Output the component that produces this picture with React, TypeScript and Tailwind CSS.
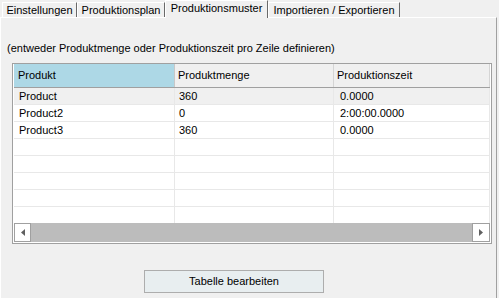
import React from "react";

const rows: [string, string, string][] = [
  ["Product", "360", "0.0000"],
  ["Product2", "0", "2:00:00.0000"],
  ["Product3", "360", "0.0000"],
  ["", "", ""],
  ["", "", ""],
  ["", "", ""],
  ["", "", ""],
  ["", "", ""],
];

function Tab({ label, w, selected }: { label: string; w: string; selected?: boolean }) {
  if (selected) {
    return (
      <div
        className={`${w} h-[18px] -mb-px relative z-10 bg-[#f0f0f0] border-t border-l border-white border-r border-r-[#696969] flex items-center justify-center leading-[13px] pb-[2px]`}
      >
        {label}
      </div>
    );
  }
  return (
    <div
      className={`${w} h-[15px] bg-[#f0f0f0] border-t border-l border-white border-r border-r-[#696969] flex items-center justify-center leading-[13px]`}
    >
      {label}
    </div>
  );
}

export default function App() {
  return (
    <div className="w-[499px] h-[298px] bg-[#f0f0f0] flex flex-col overflow-hidden font-['Liberation_Sans',Arial,sans-serif] text-[11px] text-black">
      <div className="h-[17px] flex items-end pl-[2px] shrink-0">
        <Tab label="Einstellungen" w="w-[75px]" />
        <Tab label="Produktionsplan" w="w-[88px]" />
        <Tab label="Produktionsmuster" w="w-[103px]" selected />
        <Tab label="Importieren / Exportieren" w="w-[132px]" />
      </div>
      <div className="flex-1 flex flex-col border-t border-l border-white border-r border-r-[#a0a0a0] mr-[2px]">
        <div className="mt-[24px] pl-[6px] leading-[13px]">
          (entweder Produktmenge oder Produktionszeit pro Zeile definieren)
        </div>
        <div className="mt-[8px] ml-[11px] w-[480px] border border-[#a0a0a0] bg-white px-px pb-px flex flex-col">
          <div className="h-[24px] flex border-b border-[#a0a0a0] bg-[#f0f0f0]">
            <div className="w-[161px] bg-[#add8e6] border-r border-[#c8c8c8] flex items-center pl-[4px]">Produkt</div>
            <div className="w-[159px] border-r border-[#d5d5d5] flex items-center pl-[3px]">Produktmenge</div>
            <div className="w-[156px] border-r border-[#d5d5d5] flex items-center pl-[3px]">Produktionszeit</div>
          </div>
          <div className="h-[135px] overflow-hidden flex flex-col">
            {rows.map((r, i) => (
              <div
                key={i}
                className={`h-[17px] shrink-0 flex border-b border-[#e8e8e8] ${i === 0 ? "bg-[#f0f0f0]" : "bg-white"}`}
              >
                <div className="w-[161px] border-r border-[#e8e8e8] pl-[5px] leading-[16px]">{r[0]}</div>
                <div className="w-[159px] border-r border-[#e8e8e8] pl-[4px] leading-[16px]">{r[1]}</div>
                <div className="w-[156px] border-r border-[#e8e8e8] pl-[6px] leading-[16px]">{r[2]}</div>
              </div>
            ))}
          </div>
          <div className="h-[19px] flex">
            <div className="w-[17px] bg-white border border-[#a0a0a0] flex items-center justify-center">
              <svg width="4" height="7" viewBox="0 0 4 7">
                <polygon points="4,0 4,7 0,3.5" fill="#606060" />
              </svg>
            </div>
            <div className="flex-1 bg-[#bcbcbc]" />
            <div className="w-[18px] bg-white border border-[#a0a0a0] flex items-center justify-center">
              <svg width="4" height="7" viewBox="0 0 4 7">
                <polygon points="0,0 0,7 4,3.5" fill="#606060" />
              </svg>
            </div>
          </div>
        </div>
        <div className="mt-[26px] ml-[143px] w-[180px] h-[23px] border border-[#adadad] bg-[#e8eef0] flex items-center justify-center leading-[13px]">
          Tabelle bearbeiten
        </div>
      </div>
    </div>
  );
}
